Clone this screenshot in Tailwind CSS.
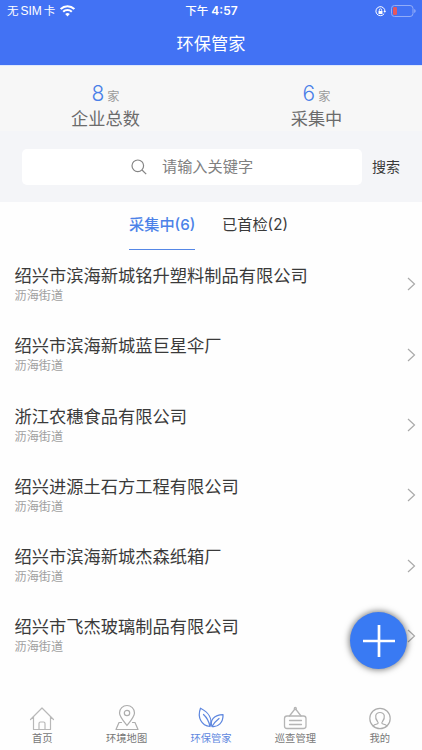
<!DOCTYPE html>
<html lang="zh-CN">
<head>
<meta charset="utf-8">
<meta name="viewport" content="width=device-width, initial-scale=1">
<title>环保管家</title>
<script src="https://cdn.jsdelivr.net/npm/@tailwindcss/browser@4"></script>
</head>
<body class="bg-white">
<div class="relative flex h-[750px] w-[422px] flex-col overflow-hidden bg-[#fefefe] font-['Liberation_Sans','Noto_Sans_CJK_SC',sans-serif] text-[#3a3a3a]">
  <header class="h-[65px] shrink-0 bg-[#4272f4] text-white">
    <div class="grid h-[22px] grid-cols-3 items-center pl-[7px] pr-[6px] text-[11.5px] leading-[22px]">
      <div class="flex items-center gap-[5px]">
        <span class="flex gap-[2px] whitespace-nowrap"><span>无</span><span class="text-[12px]">SIM</span><span>卡</span></span>
        <svg class="h-[12px] w-[15px]" viewBox="0 0 15 12" fill="none" stroke="currentColor" stroke-width="2.1"><path d="M.7 4.1a9.6 9.6 0 0 1 13.6 0M3.2 6.8a6.1 6.1 0 0 1 8.6 0"/><path d="M7.5 11.4 5.2 9a3.3 3.3 0 0 1 4.6 0z" fill="currentColor" stroke="none"/></svg>
      </div>
      <div class="flex justify-center gap-[3px] whitespace-nowrap font-medium"><span>下午</span><span class="font-['Inter'] text-[12px] font-semibold">4:57</span></div>
      <div class="flex items-center justify-end gap-[5px]">
        <svg class="h-[11px] w-[11px]" viewBox="0 0 11 11" fill="none" stroke="currentColor"><path d="M9.2 7.6a4.5 4.5 0 1 1 .7-2.1"/><path d="m8.3 5 1.6 1.8L11 5z" fill="currentColor" stroke="none"/><path d="M3.5 5h4v3h-4z" fill="currentColor" stroke="none"/><path d="M4.3 5V4a1.2 1.2 0 0 1 2.4 0v1" stroke-width=".8"/></svg>
        <svg class="h-[12px] w-[25px]" viewBox="0 0 25 12"><rect x=".5" y=".5" width="21.5" height="11" rx="3" fill="none" stroke="#92acf8"/><rect x="2" y="2" width="4" height="8" rx="1.3" fill="#e5575e"/><path d="M23.2 4v4q1.5-.5 1.5-2t-1.5-2" fill="#92acf8"/></svg>
      </div>
    </div>
    <h1 class="pt-px text-center text-[17.2px] leading-[42px]">环保管家</h1>
  </header>

  <section class="grid h-[66px] shrink-0 grid-cols-2 border-t border-[#dfe8fc] bg-[#f7f7f7] pt-[15px] text-center">
    <div>
      <p class="flex h-[26px] items-baseline justify-center gap-[3px] leading-[26px]"><span class="font-['Inter'] text-[21px] font-light text-[#4a7fe8]">8</span><span class="text-[12.2px] text-[#999]">家</span></p>
      <p class="text-[17.2px] leading-[25px] text-[#6b6b6b]">企业总数</p>
    </div>
    <div>
      <p class="flex h-[26px] items-baseline justify-center gap-[3px] leading-[26px]"><span class="font-['Inter'] text-[21px] font-light text-[#4a7fe8]">6</span><span class="text-[12.2px] text-[#999]">家</span></p>
      <p class="text-[17.2px] leading-[25px] text-[#6b6b6b]">采集中</p>
    </div>
  </section>

  <section class="flex h-[71px] shrink-0 items-center bg-[#f4f5f8] pl-[22px]">
    <div class="flex h-[36px] w-[340px] items-center justify-center gap-[15px] rounded-[5px] bg-white">
      <svg class="h-[16px] w-[16px]" viewBox="0 0 16 16" fill="none" stroke="#858585" stroke-width="1.2"><circle cx="6.8" cy="6.8" r="5.8"/><path d="m11 11 4.2 4.2"/></svg>
      <span class="pt-[2px] text-[15.2px] text-[#808080]">请输入关键字</span>
    </div>
    <span class="ml-[10px] pt-[2px] text-[14px]">搜索</span>
  </section>

  <nav class="flex h-[48px] shrink-0 gap-[27px] pl-[129px] text-[15.2px] leading-[46px]">
    <div class="w-[66px] whitespace-nowrap border-b border-[#5587e6] text-center font-medium text-[#4c82e8]">采集中<span class="font-['Inter'] font-medium">(6)</span></div>
    <div class="w-[66px] whitespace-nowrap text-center">已首检<span class="font-['Inter']">(2)</span></div>
  </nav>

  <main id="list" class="-mt-[0.7px] min-h-0 flex-1 overflow-hidden"></main>

  <footer class="grid h-[54px] shrink-0 grid-cols-5 bg-[#fefefe] text-center text-[10.3px] leading-[14px] text-[#777]">
    <div class="flex flex-col items-center pt-[8px]">
      <svg class="h-[27px] w-[28px]" viewBox="0 0 28 27" fill="none" stroke="#b8b8b8" stroke-width="1.2" stroke-linecap="round" stroke-linejoin="round"><path d="M2.5 15.500 14 4l11.500 11.500M5.500 13V25.500h17V13M11 25.500v-6q0-1.500 1.500-1.500h3q1.500 0 1.500 1.500v6"/></svg>
      <span class="pt-px">首页</span>
    </div>
    <div class="flex flex-col items-center pt-[8px]">
      <svg class="h-[27px] w-[28px]" viewBox="0 0 28 27" fill="none" stroke="#adadad" stroke-width="1.200" stroke-linecap="round" stroke-linejoin="round"><path d="M14 21.500C10 16.500 6.500 12.500 6.500 9a7.500 7.500 0 0 1 15 0c0 3.500-3.500 7.500-7.500 12.500Z"/><circle cx="14" cy="9" r="2.700"/><path d="M8.500 18.500H6L3 25.500h22l-3-7h-2.500"/></svg>
      <span class="pt-px">环境地图</span>
    </div>
    <div class="flex flex-col items-center pt-[8px] text-[#5e87df]">
      <svg class="h-[27px] w-[28px]" viewBox="0 0 28 27" fill="none" stroke="currentColor" stroke-width="1.250" stroke-linecap="round" stroke-linejoin="round"><path d="M13 22.500C4.500 21.500 0 13.500 3.500 4.200 11 8 16 14.500 13 22.500Q11.500 15 6.500 10.500"/><path d="M15 22.500C12.500 17 17 10.500 26 10.500c.5 8-5 13-11 12Q17 18.500 22 14.500"/></svg>
      <span class="pt-px">环保管家</span>
    </div>
    <div class="flex flex-col items-center pt-[8px]">
      <svg class="h-[27px] w-[28px]" viewBox="0 0 28 27" fill="none" stroke="#b5b5b5" stroke-width="1.300" stroke-linecap="round" stroke-linejoin="round"><rect x="3.500" y="12" width="21.500" height="12.500" rx="2.500"/><path d="m8.500 12 5-6.500M20 12l-5-6.500M8.500 16.500h12M8.500 20.500h12"/><circle cx="14.300" cy="4.500" r="1"/></svg>
      <span class="pt-px">巡查管理</span>
    </div>
    <div class="flex flex-col items-center pt-[8px]">
      <svg class="h-[27px] w-[28px]" viewBox="0 0 28 27" fill="none" stroke="#adadad" stroke-width="1.200" stroke-linecap="round" stroke-linejoin="round"><circle cx="14" cy="14.500" r="10.200"/><path d="M7 21.800q1.200-1.300 4-1.800c1.500-.3 1.300-1.500.5-2.500-3-3.500-2.500-9 2.500-9s5.500 5.500 2.500 9c-.8 1-1 2.200.5 2.500q2.800.5 4 1.800"/></svg>
      <span class="pt-px">我的</span>
    </div>
  </footer>

  <button aria-label="添加" class="absolute left-[350px] top-[612px] flex h-[57px] w-[57px] items-center justify-center rounded-full bg-[#397af3] shadow-[0_0_6px_1px_rgba(0,0,0,0.5)]">
    <svg class="h-[32px] w-[32px]" viewBox="0 0 32 32" stroke="#fff" stroke-width="2.700"><path d="M16 0v32M0 16h32"/></svg>
  </button>
</div>
<script>
const names = ['绍兴市滨海新城铭升塑料制品有限公司','绍兴市滨海新城蓝巨星伞厂','浙江农穗食品有限公司','绍兴进源土石方工程有限公司','绍兴市滨海新城杰森纸箱厂','绍兴市飞杰玻璃制品有限公司'];
document.getElementById('list').innerHTML = names.map(n => `
  <div class="flex h-[70.3px] items-center justify-between pl-[14.500px] pr-[6px]">
    <div class="pt-[1px]">
      <p class="text-[17.250px] leading-[23px] text-[#3a3a3a]">${n}</p>
      <p class="text-[12.150px] leading-[17px] text-[#a0a0a0]">沥海街道</p>
    </div>
    <svg class="h-[14px] w-[9px]" viewBox="0 0 9 14" fill="none" stroke="#aaa" stroke-width="1.200"><path d="m1 1 6.500 6L1 13"/></svg>
  </div>`).join('');
</script>
</body>
</html>
